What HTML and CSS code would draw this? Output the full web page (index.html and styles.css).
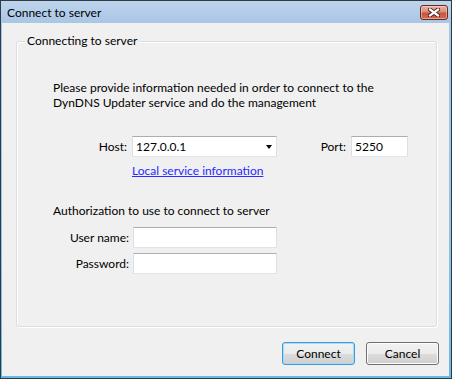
FILE: index.html
```html
<!DOCTYPE html>
<html>
<head>
<meta charset="utf-8">
<link rel="stylesheet" href="styles.css">
</head>
<body>
<div class="window">
  <div class="titlebar">
    <span class="title">Connect to server</span>
    <button class="close" aria-label="Close">
      <svg width="12" height="9" viewBox="0 0 12 9">
        <path d="M2 1.5 L10 7.5 M10 1.5 L2 7.5" stroke="#3d1710" stroke-width="4" stroke-linecap="square" fill="none"/>
        <path d="M2 1.5 L10 7.5 M10 1.5 L2 7.5" stroke="#ffffff" stroke-width="2.2" stroke-linecap="square" fill="none"/>
      </svg>
    </button>
  </div>
  <div class="client">
    <div class="group">
      <span class="group-title">Connecting to server</span>
      <p class="intro">Please provide information needed in order to connect to the<br>DynDNS Updater service and do the management</p>
      <div class="host-row">
        <label class="lbl lbl-host">Host:</label>
        <div class="combo"><span class="val">127.0.0.1</span><span class="arrow"></span></div>
        <label class="lbl lbl-port">Port:</label>
        <div class="field port"><span class="val">5250</span></div>
      </div>
      <a class="link" href="#">Local service information</a>
      <p class="auth">Authorization to use to connect to server</p>
      <div class="cred-row">
        <label class="lbl lbl-cred">User name:</label>
        <div class="field cred"></div>
      </div>
      <div class="cred-row second">
        <label class="lbl lbl-cred">Password:</label>
        <div class="field cred"></div>
      </div>
    </div>
    <div class="buttons">
      <button class="btn default">Connect</button>
      <button class="btn">Cancel</button>
    </div>
  </div>
</div>
</body>
</html>
```
FILE: styles.css
```css
* { box-sizing: border-box; }
html, body { margin: 0; padding: 0; background: #f0f0f0; }
body {
  font-family: Lato, "Open Sans", sans-serif;
  font-size: 12px;
  color: #000;
}
.window {
  width: 452px;
  height: 379px;
  border: 1px solid #2e3a44;
  background: linear-gradient(#bed4ec 0px, #a9c6e6 22px, #93c4e8 60%, #6ab8e6 100%);
  display: flex;
  flex-direction: column;
}
.titlebar {
  height: 22px;
  display: flex;
  justify-content: space-between;
  align-items: flex-start;
  padding-left: 6px;
  padding-right: 3px;
}
.title {
  line-height: 20px;
  margin-top: 2px;
}
.close {
  margin-top: 4px;
  width: 28px;
  height: 15px;
  padding: 0;
  border: 1px solid #6b2a20;
  border-radius: 3px;
  background: linear-gradient(#eab3a4 0%, #dc8a76 45%, #c9533e 55%, #d56a52 100%);
  box-shadow: inset 0 0 0 1px rgba(255,230,220,0.45);
  display: flex;
  align-items: center;
  justify-content: center;
}
.close svg { display: block; }
.client {
  flex: 1;
  margin: 0 2px 2px 1px;
  background: #f0f0f0;
  display: flex;
  flex-direction: column;
}
.group {
  position: relative;
  margin: 18px 12px 0 14px;
  height: 286px;
  border: 1px solid #d5dfe5;
  border-radius: 3px;
  box-shadow: 1px 1px 0 #fff, inset 1px 1px 0 #fff;
  padding: 0 0 0 36px;
}
.group-title {
  position: absolute;
  top: -9px;
  left: 8px;
  padding: 0 2px;
  background: #f0f0f0;
  line-height: 16px;
}
.intro {
  margin: 38px 0 0 0;
  line-height: 15px;
}
.host-row {
  display: flex;
  align-items: center;
  margin-top: 26px;
  height: 21px;
}
.lbl { display: block; text-align: right; line-height: 15px; }
.lbl-host { width: 74px; margin-left: 0; margin-right: 5px; }
.lbl-port { width: 69px; margin-right: 5px; }
.field, .combo {
  height: 21px;
  background: #fff;
  border: 1px solid #e2e3ea;
  border-top-color: #abadb3;
  border-left-color: #dbdfe6;
  border-right-color: #dbdfe6;
  display: flex;
  align-items: center;
}
.combo {
  width: 145px;
  padding-left: 3px;
  justify-content: space-between;
  padding-right: 4px;
}
.arrow {
  width: 0; height: 0;
  border-left: 3.5px solid transparent;
  border-right: 3.5px solid transparent;
  border-top: 4px solid #000;
}
.port { width: 57px; padding-left: 3px; }
.link {
  display: block;
  width: max-content;
  margin: 6px 0 0 79px;
  color: #2a2aff;
  line-height: 15px;
}
.auth {
  margin: 25px 0 0 0;
  line-height: 15px;
}
.cred-row {
  display: flex;
  align-items: center;
  margin-top: 9px;
  height: 21px;
}
.cred-row.second { margin-top: 5px; }
.lbl-cred { width: 76px; margin-right: 4px; }
.cred { width: 144px; }
.buttons {
  display: flex;
  justify-content: flex-end;
  gap: 11px;
  margin: 15px 10px 0 0;
}
.btn {
  width: 73px;
  height: 23px;
  padding: 0;
  font-family: inherit;
  font-size: 12px;
  color: #000;
  border: 1px solid #707070;
  border-radius: 3px;
  background: linear-gradient(#f2f2f2 0%, #ebebeb 50%, #dddddd 50%, #cfcfcf 100%);
  box-shadow: inset 0 0 0 1px #fcfcfc;
}
.btn.default {
  border-color: #3c9ad6;
  box-shadow: inset 0 0 0 1px #a6dcf7;
}
```
